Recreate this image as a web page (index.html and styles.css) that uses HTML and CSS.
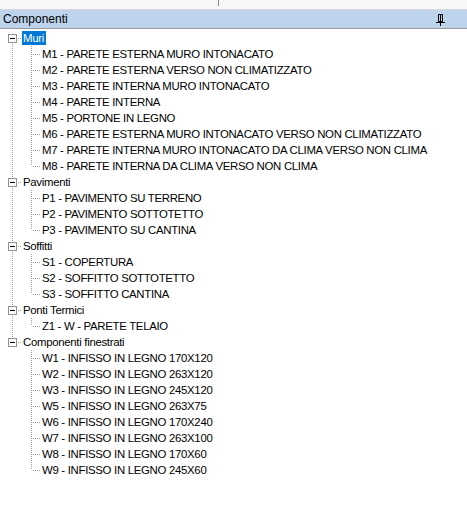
FILE: index.html
```html
<!DOCTYPE html>
<html lang="it">
<head>
  <meta charset="UTF-8" />
  <title>Componenti</title>
  <link rel="stylesheet" href="styles.css">
</head>
<body>
  <div class="strip"><span class="splitter"></span></div>
  <div class="panel">
    <div class="panel-head">
      <span>Componenti</span>
      <svg class="pin" width="9" height="12" viewBox="0 0 9 12">
        <path d="M2.5 0.5h4v7h-4z" fill="none" stroke="#000"/>
        <path d="M4.5 1v6" stroke="#000"/>
        <path d="M0 8.5h9" stroke="#000"/>
        <path d="M4.5 9v3" stroke="#000"/>
      </svg>
    </div>
    <div class="tree">
      <!-- Muri -->
      <div class="row root first"><span class="ind box"></span><span class="label sel">Muri</span></div>
      <div class="row"><span class="ind pass"></span><span class="ind leaf"></span><span class="label">M1 - PARETE ESTERNA MURO INTONACATO</span></div>
      <div class="row"><span class="ind pass"></span><span class="ind leaf"></span><span class="label">M2 - PARETE ESTERNA VERSO NON CLIMATIZZATO</span></div>
      <div class="row"><span class="ind pass"></span><span class="ind leaf"></span><span class="label">M3 - PARETE INTERNA MURO INTONACATO</span></div>
      <div class="row"><span class="ind pass"></span><span class="ind leaf"></span><span class="label">M4 - PARETE INTERNA</span></div>
      <div class="row"><span class="ind pass"></span><span class="ind leaf"></span><span class="label">M5 - PORTONE IN LEGNO</span></div>
      <div class="row"><span class="ind pass"></span><span class="ind leaf"></span><span class="label">M6 - PARETE ESTERNA MURO INTONACATO VERSO NON CLIMATIZZATO</span></div>
      <div class="row"><span class="ind pass"></span><span class="ind leaf"></span><span class="label">M7 - PARETE INTERNA MURO INTONACATO DA CLIMA VERSO NON CLIMA</span></div>
      <div class="row"><span class="ind pass"></span><span class="ind leaf last"></span><span class="label">M8 - PARETE INTERNA DA CLIMA VERSO NON CLIMA</span></div>
      <!-- Pavimenti -->
      <div class="row root"><span class="ind box"></span><span class="label">Pavimenti</span></div>
      <div class="row"><span class="ind pass"></span><span class="ind leaf"></span><span class="label">P1 - PAVIMENTO SU TERRENO</span></div>
      <div class="row"><span class="ind pass"></span><span class="ind leaf"></span><span class="label">P2 - PAVIMENTO SOTTOTETTO</span></div>
      <div class="row"><span class="ind pass"></span><span class="ind leaf last"></span><span class="label">P3 - PAVIMENTO SU CANTINA</span></div>
      <!-- Soffitti -->
      <div class="row root"><span class="ind box"></span><span class="label">Soffitti</span></div>
      <div class="row"><span class="ind pass"></span><span class="ind leaf"></span><span class="label">S1 - COPERTURA</span></div>
      <div class="row"><span class="ind pass"></span><span class="ind leaf"></span><span class="label">S2 - SOFFITTO SOTTOTETTO</span></div>
      <div class="row"><span class="ind pass"></span><span class="ind leaf last"></span><span class="label">S3 - SOFFITTO CANTINA</span></div>
      <!-- Ponti Termici -->
      <div class="row root"><span class="ind box"></span><span class="label">Ponti Termici</span></div>
      <div class="row"><span class="ind pass"></span><span class="ind leaf last"></span><span class="label">Z1 - W - PARETE TELAIO</span></div>
      <!-- Componenti finestrati -->
      <div class="row root last"><span class="ind box"></span><span class="label">Componenti finestrati</span></div>
      <div class="row"><span class="ind"></span><span class="ind leaf"></span><span class="label">W1 - INFISSO IN LEGNO 170X120</span></div>
      <div class="row"><span class="ind"></span><span class="ind leaf"></span><span class="label">W2 - INFISSO IN LEGNO 263X120</span></div>
      <div class="row"><span class="ind"></span><span class="ind leaf"></span><span class="label">W3 - INFISSO IN LEGNO 245X120</span></div>
      <div class="row"><span class="ind"></span><span class="ind leaf"></span><span class="label">W5 - INFISSO IN LEGNO 263X75</span></div>
      <div class="row"><span class="ind"></span><span class="ind leaf"></span><span class="label">W6 - INFISSO IN LEGNO 170X240</span></div>
      <div class="row"><span class="ind"></span><span class="ind leaf"></span><span class="label">W7 - INFISSO IN LEGNO 263X100</span></div>
      <div class="row"><span class="ind"></span><span class="ind leaf"></span><span class="label">W8 - INFISSO IN LEGNO 170X60</span></div>
      <div class="row"><span class="ind"></span><span class="ind leaf last"></span><span class="label">W9 - INFISSO IN LEGNO 245X60</span></div>
    </div>
  </div>
</body>
</html>
```

FILE: styles.css
```css
body {
  margin: 0;
  font-family: "Liberation Sans", Arial, sans-serif;
  font-size: 12px;
  color: #000;
  background: #fff;
}
.strip {
  height: 9px;
  background: #f7f7f7;
  border-bottom: 1px solid #d9d9d9;
  position: relative;
}
.splitter {
  position: absolute;
  left: 218px;
  top: 0;
  width: 1px;
  height: 6px;
  background: #8a8a8a;
}
.panel-head {
  height: 18px;
  background: #bed3ec;
  border-bottom: 1px solid #9a9a9a;
  display: flex;
  align-items: center;
  justify-content: space-between;
  padding: 0 22px 0 3px;
}
.pin { display: block; margin-top: 1px; }
.tree {
  padding-top: 1px;
  font-size: 11.4px;
  letter-spacing: -0.3px;
}
.row {
  height: 16px;
  display: flex;
  align-items: center;
  padding-left: 3px;
  white-space: nowrap;
}
.ind {
  width: 19px;
  height: 16px;
  flex: none;
  position: relative;
}
/* dotted tree lines */
.pass::before,
.leaf::before,
.box::before,
.box::after,
.leaf::after {
  content: "";
  position: absolute;
}
.pass::before,
.leaf::before,
.box::before {
  left: 9px;
  top: 0;
  width: 1px;
  height: 16px;
  background: repeating-linear-gradient(to bottom, #a0a0a0 0 1px, transparent 1px 2px);
}
.leaf.last::before { height: 8px; }
.leaf::after {
  left: 10px;
  top: 8px;
  width: 9px;
  height: 1px;
  background: repeating-linear-gradient(to right, transparent 0 1px, #a0a0a0 1px 2px);
}
.root.first .box::before { top: 8px; height: 8px; }
.root.last .box::before { height: 8px; }
.box::after {
  left: 5px;
  top: 4px;
  width: 7px;
  height: 7px;
  border: 1px solid #919191;
  background: linear-gradient(#000, #000) no-repeat center / 5px 1px, #fff;
}
.root .box {
  background: repeating-linear-gradient(to right, transparent 0 1px, #a0a0a0 1px 2px) no-repeat 14px 8px / 5px 1px;
}
.label {
  padding: 0 2px 0 1px;
  line-height: 14px;
  height: 14px;
}
.sel {
  background: #0078d7;
  color: #fff;
}
```
